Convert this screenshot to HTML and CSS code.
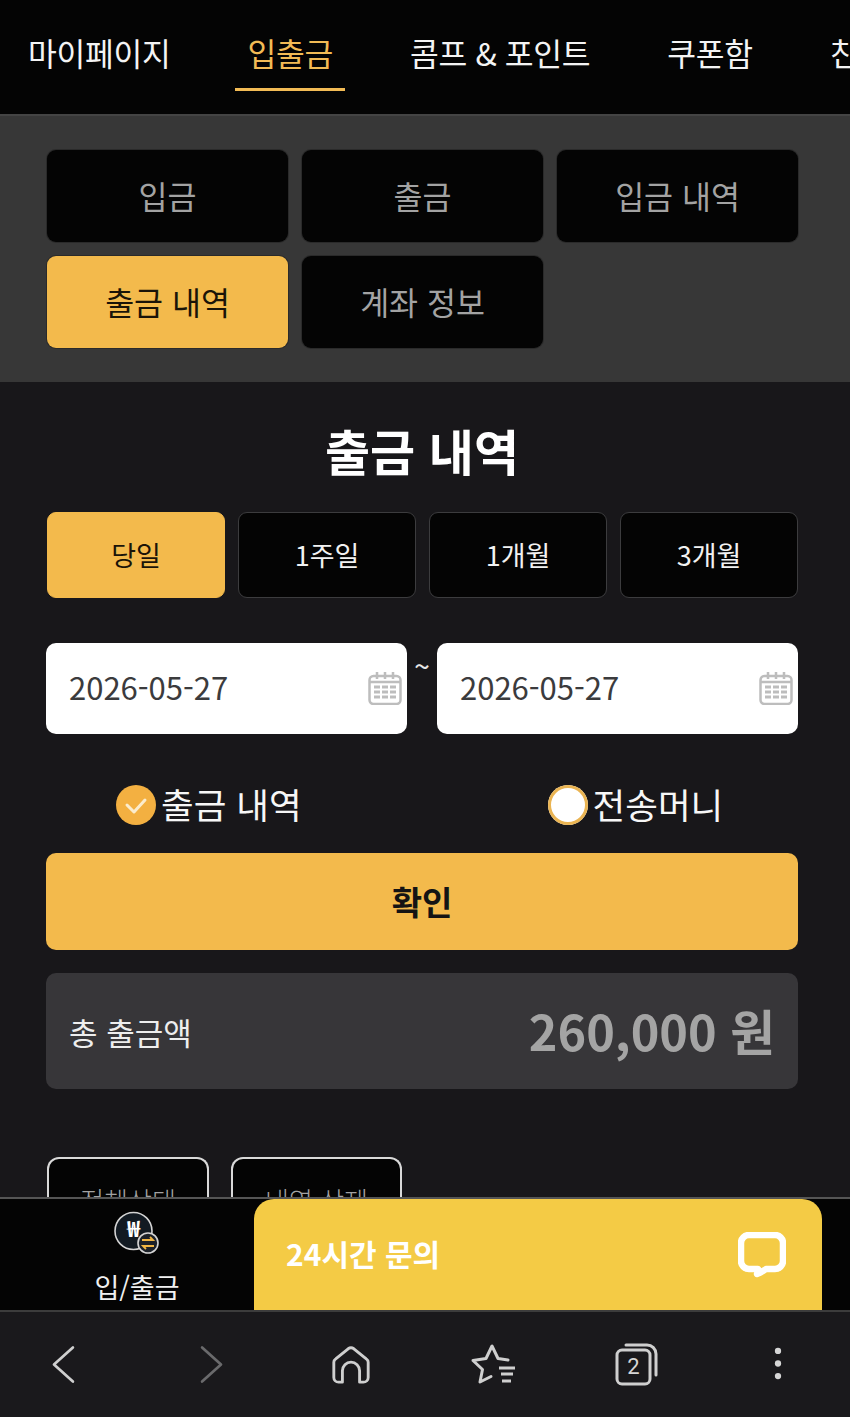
FILE: index.html
```html
<!DOCTYPE html>
<html lang="ko">
<head>
<meta charset="utf-8">
<title>출금 내역</title>
<link rel="stylesheet" href="styles.css">
</head>
<body>
<div class="page">
  <nav class="topnav">
    <a class="tab">마이페이지</a>
    <a class="tab active">입출금</a>
    <a class="tab">콤프 &amp; 포인트</a>
    <a class="tab">쿠폰함</a>
    <a class="tab">친구추천</a>
  </nav>
  <section class="submenu">
    <a class="sub">입금</a>
    <a class="sub">출금</a>
    <a class="sub">입금 내역</a>
    <a class="sub on">출금 내역</a>
    <a class="sub">계좌 정보</a>
  </section>
  <main class="main">
    <h1 class="title">출금 내역</h1>
    <div class="periods">
      <a class="period on">당일</a>
      <a class="period">1주일</a>
      <a class="period">1개월</a>
      <a class="period">3개월</a>
    </div>
    <div class="dates">
      <div class="date"><span class="date-text">2026-05-27</span>
        <svg class="cal" viewBox="0 0 34 34"><use href="#cal"/></svg></div>
      <span class="tilde">~</span>
      <div class="date"><span class="date-text">2026-05-27</span>
        <svg class="cal" viewBox="0 0 34 34"><use href="#cal"/></svg></div>
    </div>
    <div class="radios">
      <label class="radio"><span class="dot checked"><svg viewBox="0 0 40 40"><path d="M11 20l7 7 11-12" fill="none" stroke="#fbeccd" stroke-width="3" stroke-linecap="round" stroke-linejoin="round"/></svg></span>출금 내역</label>
      <label class="radio second"><span class="dot"></span>전송머니</label>
    </div>
    <button class="confirm">확인</button>
    <div class="total">
      <span class="total-label">총 출금액</span>
      <span class="total-value">260,000 원</span>
    </div>
    <div class="filters">
      <a class="filter f1">전체상태</a>
      <a class="filter f2">내역 삭제</a>
    </div>
  </main>

  <div class="dock">
    <a class="dock-item">
      <svg class="wicon" viewBox="0 0 46 44">
        <circle cx="19.500" cy="20" r="18.500" fill="#121a22" stroke="#d4d4d4" stroke-width="1.600"/>
        <text x="19.500" y="26" text-anchor="middle" class="won">₩</text>
        <circle cx="34" cy="32" r="10" fill="#1c2128" stroke="#d4d4d4" stroke-width="1.600"/>
        <path d="M28 29h11l-3-3M40 35H29l3 3" fill="none" stroke="#f0b544" stroke-width="1.800"/>
      </svg>
      <span class="dock-label">입/출금</span>
    </a>
    <a class="chat">
      <span class="chat-text">24시간 문의</span>
      <svg class="bubble" viewBox="0 0 48 46"><path d="M11 3h26a8 8 0 0 1 8 8v18a8 8 0 0 1-8 8H28q-4 3-9 5 2-3 1-5h-9a8 8 0 0 1-8-8V11a8 8 0 0 1 8-8z" fill="none" stroke="#fff" stroke-width="6.500" stroke-linejoin="round"/></svg>
    </a>
  </div>

  <div class="browser">
    <svg class="bicon" viewBox="0 0 40 50"><path d="M31 6L10 25l21 19" fill="none" stroke="#cfcfcf" stroke-width="3" stroke-linecap="round" stroke-linejoin="round"/></svg>
    <svg class="bicon" viewBox="0 0 40 50"><path d="M9 6l21 19L9 44" fill="none" stroke="#6a6a6c" stroke-width="3" stroke-linecap="round" stroke-linejoin="round"/></svg>
    <svg class="bicon" viewBox="0 0 44 44"><path d="M4 35V19q0-2 2-3.500L19 5q3-2 6 0l13 10.500q2 1.500 2 3.500v16a5 5 0 0 1-5 5h-4V28a7 7 0 0 0-18 0v12H9a5 5 0 0 1-5-5z" fill="none" stroke="#cfcfcf" stroke-width="3" stroke-linejoin="round"/></svg>
    <svg class="bicon" viewBox="0 0 46 44"><path d="M37 18l-10-1.500L21 4l-6 12.500L2 18.500l9.500 9L9 40l11-5.500" fill="none" stroke="#cfcfcf" stroke-width="3" stroke-linecap="round" stroke-linejoin="round"/><path d="M28 26h16M30 32h12M31 39h9" stroke="#cfcfcf" stroke-width="3" fill="none"/></svg>
    <span class="tabs-icon">
      <svg viewBox="0 0 44 44"><rect x="2" y="8" width="33" height="34" rx="5" fill="none" stroke="#cfcfcf" stroke-width="3"/><path d="M11 3h21a9 9 0 0 1 9 9v21" fill="none" stroke="#cfcfcf" stroke-width="3" stroke-linecap="round"/></svg>
      <b class="tabs-num">2</b>
    </span>
    <svg class="bicon" viewBox="0 0 40 50"><circle cx="20" cy="11" r="3.500" fill="#d6d6d6"/><circle cx="20" cy="25" r="3.500" fill="#d6d6d6"/><circle cx="20" cy="39" r="3.500" fill="#d6d6d6"/></svg>
  </div>
</div>
<svg class="defs" aria-hidden="true"><defs>
  <g id="cal" fill="none" stroke="#bdbdbd" stroke-width="2.500">
    <rect x="1.500" y="5" width="31" height="28" rx="4"/>
    <path d="M2 11h30M9 1v7M17 1v7M25 1v7"/>
    <path d="M6 16h22M6 21h22M6 26h22" stroke-width="3" stroke-dasharray="6 2"/>
  </g>
</defs></svg>
</body>
</html>
```

FILE: styles.css
```css
* { box-sizing: border-box; }
html, body { margin: 0; padding: 0; background: #18171a; }
body { font-family: "Noto Sans CJK KR", "Noto Sans", sans-serif; color: #fff; }
a { display: block; }
.page { position: relative; width: 850px; height: 1417px; overflow: hidden; }
.defs { width: 0; height: 0; position: absolute; }

.topnav { height: 114px; background: #040404; display: flex; gap: 53px; padding-left: 16px; white-space: nowrap; overflow: hidden; }
.tab { flex: none; height: 91px; padding: 29px 12px 0; font-size: 31.3px; line-height: 47px; color: #f4f4f4; font-weight: 400; letter-spacing: -0.3px; }
.tab.active { color: #f2bb55; border-bottom: 3px solid #f2bb55; }

.submenu { height: 268px; background: #373737; border-top: 2px solid #444; padding: 34px 52px 34px 47px; display: grid; grid-template-columns: repeat(3, 241px); grid-auto-rows: 92px; gap: 14px 14px; align-content: start; }
.sub { background: #040404; border-radius: 9px; box-shadow: 0 0 0 1px #2a2a2a; color: #a3a3a3; font-size: 31.5px; font-weight: 400; display: flex; align-items: center; justify-content: center; padding-bottom: 3px; }
.sub.on { background: #f3ba4c; color: #1a1408; }

.main { background: #18171a; padding: 0 52px 0 46px; }
.title { margin: 0; padding-top: 36px; height: 130px; font-size: 49px; line-height: 64px; font-weight: 700; text-align: center; }
.periods { display: grid; grid-template-columns: repeat(4, 178px); gap: 13px; padding-left: 1px; }
.period { height: 86px; background: #040404; border: 1px solid #3c3c3e; border-radius: 9px; font-size: 27px; font-weight: 400; display: flex; align-items: center; justify-content: center; color: #f2f2f2; padding-bottom: 2px; }
.period.on { background: #f3ba4c; border-color: #f3ba4c; color: #1a1408; }

.dates { display: flex; margin-top: 45px; height: 91px; }
.date { width: 361px; height: 91px; background: #fff; border-radius: 10px; padding: 0 5px 0 23px; display: flex; align-items: center; justify-content: space-between; color: #3b3b3d; font-size: 31px; font-weight: 400; }
.date-text { margin-top: -4px; }
.cal { width: 34px; height: 34px; margin-top: -2px; }
.tilde { width: 30px; text-align: center; font-size: 28px; line-height: 44px; color: #e6e6e6; }

.radios { height: 119px; padding-top: 45px; display: flex; }
.radio { display: flex; align-items: center; height: 48px; font-size: 35.5px; font-weight: 400; color: #f7f7f7; margin-left: 70px; }
.radio.second { margin-left: 246px; }
.dot { width: 40px; height: 40px; border-radius: 50%; background: #fff; box-shadow: inset 0 0 0 3px #eab452; margin-right: 5px; flex: none; margin-top: 3px; }
.dot.checked { background: #f3b041; box-shadow: none; }
.dot svg { display: block; width: 40px; height: 40px; }

.confirm { display: block; width: 752px; height: 97px; border: 0; border-radius: 10px; background: #f3ba4c; font-family: inherit; font-size: 33px; line-height: 90px; padding: 0 0 2px; font-weight: 700; color: #141414; }
.total { margin-top: 23px; height: 116px; background: #373639; border-radius: 10px; display: flex; align-items: center; justify-content: space-between; padding: 0 23px 0 23px; }
.total-label { font-size: 31px; font-weight: 400; color: #eee; }
.total-value { font-size: 48.6px; font-weight: 700; color: #a4a4a4; margin-top: -2px; }

.filters { display: flex; gap: 22px; margin-top: 68px; padding-left: 1px; }
.filter { height: 90px; background: #040404; border: 2px solid #d9d9d9; border-bottom: 0; border-radius: 12px 12px 0 0; font-size: 26px; font-weight: 300; color: #a3a3a3; text-align: center; padding-top: 22px; }
.f1 { width: 162px; }
.f2 { width: 171px; }

.dock { position: absolute; left: 0; right: 0; top: 1197px; height: 115px; background: #040404; border-top: 2px solid #555; border-bottom: 2px solid #3c3c3c; display: flex; }
.dock-item { width: 254px; padding-left: 20px; display: flex; flex-direction: column; align-items: center; color: #f0f0f0; font-size: 27px; font-weight: 400; }
.wicon { width: 46px; height: 44px; margin-top: 12px; flex: none; }
.won { font-size: 22px; font-weight: 700; fill: #fff; font-family: "Noto Sans CJK KR", sans-serif; }
.dock-label { line-height: 36px; margin-top: 14px; }
.chat { width: 568px; height: 111px; background: #f4cb45; border-radius: 20px 20px 0 0; display: flex; align-items: center; justify-content: space-between; padding: 0 36px 0 32px; color: #fff; font-size: 30px; font-weight: 700; }
.chat-text { margin-top: -4px; }
.bubble { width: 48px; height: 46px; }

.browser { position: absolute; left: 0; right: 0; top: 1312px; height: 105px; background: #1a191c; }
.bicon { position: absolute; top: 30px; height: 44px; width: 44px; }
.bicon:nth-child(1) { left: 45px; width: 36px; height: 45px; }
.bicon:nth-child(2) { left: 194px; width: 36px; height: 45px; }
.bicon:nth-child(3) { left: 330px; top: 32px; width: 42px; height: 42px; }
.bicon:nth-child(4) { left: 471px; top: 30px; width: 46px; height: 44px; }
.bicon:nth-child(6) { left: 760px; top: 29px; width: 36px; height: 45px; }
.tabs-icon { position: absolute; left: 615px; top: 30px; width: 44px; height: 44px; }
.tabs-icon svg { display: block; width: 44px; height: 44px; }
.tabs-num { position: absolute; left: 2px; top: 8px; width: 33px; text-align: center; font-size: 22px; line-height: 34px; font-weight: 400; color: #d6d6d6; font-family: "Roboto", sans-serif; }
```
